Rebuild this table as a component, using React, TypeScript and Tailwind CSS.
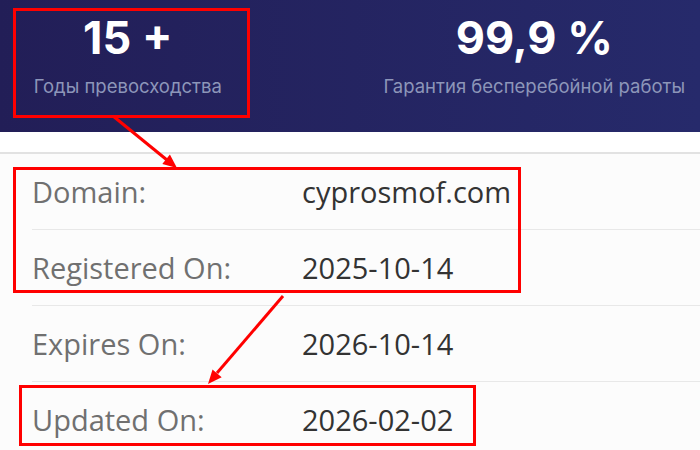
import React from "react";

const rows = [
  { label: "Domain:", value: "cyprosmof.com" },
  { label: "Registered On:", value: "2025-10-14" },
  { label: "Expires On:", value: "2026-10-14" },
  { label: "Updated On:", value: "2026-02-02" },
];

export default function App() {
  return (
    <div className="relative w-[700px] h-[450px] overflow-hidden bg-white">
      <div
        className="h-[132px] flex bg-gradient-to-r from-[#221e57] to-[#262a6b]"
        style={{ fontFamily: "Inter, 'Noto Sans', sans-serif" }}
      >
        <div className="ml-[3px] w-[256px] pt-[15px] flex flex-col items-center">
          <div className="text-[45px] leading-[45px] font-bold text-white">15 +</div>
          <div className="mt-[15px] text-[18.5px] leading-[22px] text-[#8d96b9]">Годы превосходства</div>
        </div>
        <div className="ml-[116px] w-[340px] pt-[15px] flex flex-col items-center">
          <div className="text-[45px] leading-[45px] font-bold text-white">99,9 %</div>
          <div className="mt-[15px] text-[18.5px] leading-[22px] text-[#8d96b9]">Гарантия бесперебойной работы</div>
        </div>
      </div>
      <div className="h-[20px] bg-white" />
      <div
        className="border-t-2 border-[#e2e2e2] bg-[#fcfcfc] pl-[32px]"
        style={{ fontFamily: "'Open Sans', sans-serif" }}
      >
        {rows.map((r) => (
          <div key={r.label} className="h-[76px] flex items-center border-b border-[#e8e8e8] text-[29px]">
            <div className="w-[270px] text-[#707070]">{r.label}</div>
            <div className="text-[#333333]">{r.value}</div>
          </div>
        ))}
      </div>

      <div className="absolute left-[13px] top-[8px] w-[237px] h-[110px] border-[3px] border-[#ff0000]" />
      <div className="absolute left-[13px] top-[167px] w-[508px] h-[126px] border-[3px] border-[#ff0000]" />
      <div className="absolute left-[19px] top-[385px] w-[457px] h-[61px] border-[3px] border-[#ff0000]" />
      <svg className="absolute left-0 top-0" width="700" height="450" viewBox="0 0 700 450">
        <line x1="113" y1="116" x2="167" y2="160" stroke="#ff0000" strokeWidth="3" />
        <polygon points="177,168 162.3,163.9 169.9,154.5" fill="#ff0000" />
        <line x1="283" y1="296" x2="217" y2="373" stroke="#ff0000" strokeWidth="3" />
        <polygon points="208,384 221.7,377.2 212.5,369.4" fill="#ff0000" />
      </svg>
    </div>
  );
}
